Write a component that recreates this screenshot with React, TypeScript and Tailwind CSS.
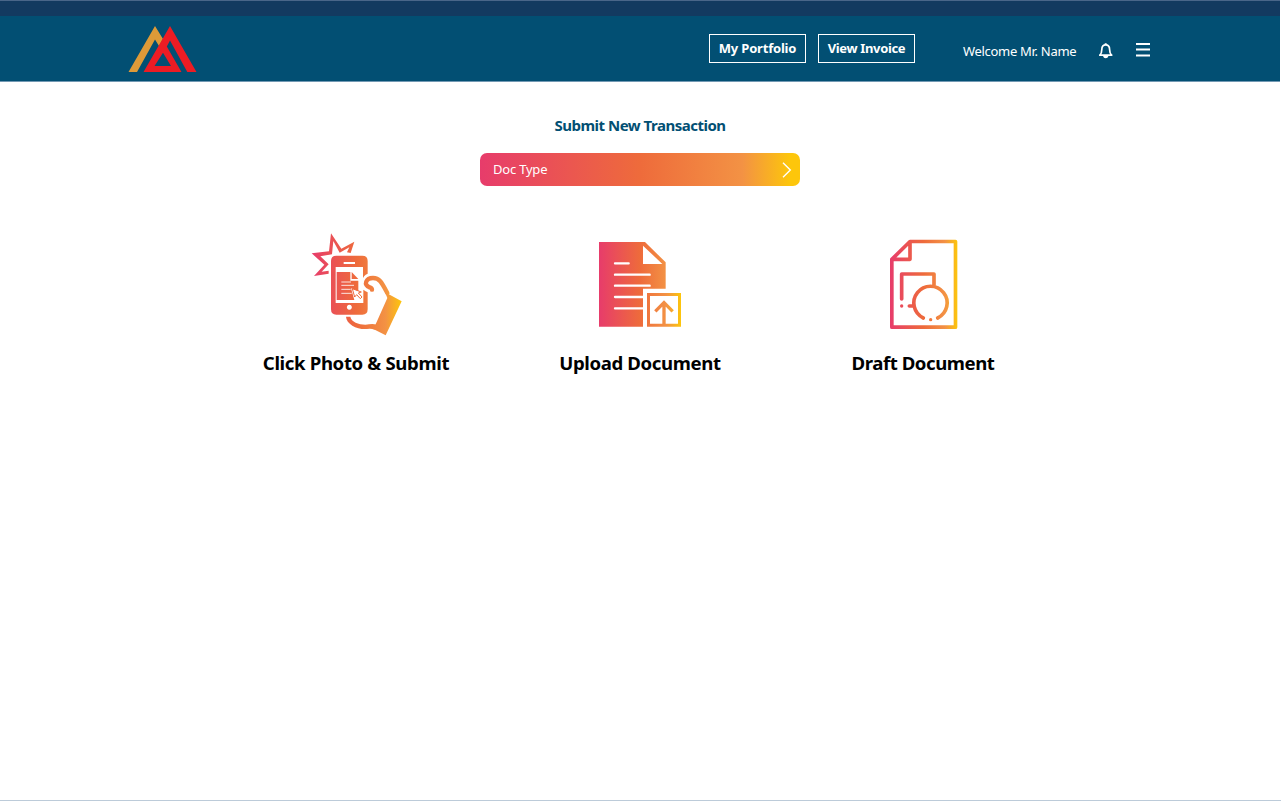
import React from "react";

function Stops() {
  return (
    <>
      <stop offset="0" stopColor="#e73c6b" />
      <stop offset="0.5" stopColor="#ee6b3b" />
      <stop offset="0.82" stopColor="#f39244" />
      <stop offset="1" stopColor="#fdc60b" />
    </>
  );
}

function Logo() {
  return (
    <svg className="h-[50px] w-[70px]" viewBox="128 24 70 50">
      <path fill="#dd9a38" d="M128.5 72 155 26l8 13-4 7-4-6.500L137 72Z" />
      <path
        fill="#ec1c24"
        fillRule="evenodd"
        d="M170 26 143.500 72H181.500L166.800 46.500 170 40.500 187.300 72H196.500ZM163 52.800 171 66H154.500Z"
      />
    </svg>
  );
}

function PhotoIcon() {
  return (
    <svg className="h-[115px] w-[110px]" viewBox="0 0 330 345" fill="none">
      <defs>
        <linearGradient id="photo" gradientUnits="userSpaceOnUse" x1="35" y1="0" x2="305" y2="0">
          <Stops />
        </linearGradient>
      </defs>
      <path
        fill="url(#photo)"
        d="M163 50 124 71 93 25 87 79 35 85 73 119 42 153 86 146V137L65 140 86 118 61 94 96 88 100 48 119 83 148 67 141 82 152 84Z"
      />
      <path
        fill="url(#photo)"
        fillRule="evenodd"
        d="M109 92H187Q203 92 203 108V146Q190 152 189 160V126H107V234H190V194Q197 199 203 202V253Q203 269 187 269H109Q93 269 93 253V108Q93 92 109 92ZM131 111V117H165V111ZM148 239a7.500 7.500 0 1 0 .1 0Z"
      />
      <path fill="url(#photo)" d="M110 141H151V167H175V198L153 190 163 225H110Z" />
      <path fill="url(#photo)" d="M155 141 175 162H155Z" />
      <path stroke="#fff" strokeWidth="2.500" d="M124 171H153M124 181H162M124 193H152M124 205H155" />
      <path
        stroke="url(#photo)"
        strokeWidth="3"
        strokeLinejoin="round"
        d="M157 191 164 216 170 209 181 221 186 216 175 204 184 201Z"
      />
      <path
        stroke="url(#photo)"
        strokeWidth="13"
        strokeLinecap="round"
        d="M216 194Q216 190 209 187C189 180 198 159 219 159C239 159 245 172 262 204"
      />
      <path
        fill="url(#photo)"
        d="M138 275H151C154 293 185 302 207 298Q219 295 230 299L224 314Q212 309 201 312C174 315 139 298 138 275Z"
      />
      <path fill="url(#photo)" d="M265 207 305 229 257 331 220 312 230 291 262 219 256 204Z" />
    </svg>
  );
}

function UploadIcon() {
  return (
    <svg className="h-[100px] w-[100px]" viewBox="0 0 300 300" fill="none">
      <defs>
        <linearGradient id="upload" gradientUnits="userSpaceOnUse" x1="27" y1="0" x2="273" y2="0">
          <Stops />
        </linearGradient>
      </defs>
      <path
        fill="url(#upload)"
        fillRule="evenodd"
        d="M27 21H165L227 82V161H159V275H27ZM159 32V87H217Z"
      />
      <path
        stroke="#fff"
        strokeWidth="7"
        strokeLinecap="round"
        d="M75 85H116M75 119H179M75 152H179M75 186H158M75 220H158"
      />
      <path stroke="url(#upload)" strokeWidth="9" d="M175.500 178.500H268.500V270.500H175.500Z" />
      <path stroke="url(#upload)" strokeWidth="10" d="M222 270V203M196 229 222 203 248 229" />
    </svg>
  );
}

function DraftIcon() {
  return (
    <svg className="h-[105px] w-[90px]" viewBox="0 0 270 315" fill="none">
      <defs>
        <linearGradient id="draft" gradientUnits="userSpaceOnUse" x1="30" y1="0" x2="232" y2="0">
          <Stops />
        </linearGradient>
      </defs>
      <g stroke="url(#draft)" strokeWidth="11" strokeLinecap="round" strokeLinejoin="round">
        <path d="M35.500 82 90 28.500H226.500V285.500H35.500ZM90 28.500V82H35.500" />
        <path d="M65 201V126H162V160M88 222H101M130 258A50 50 0 1 1 173 258" />
      </g>
      <circle cx="65" cy="222" r="5" fill="url(#draft)" />
      <circle cx="152" cy="263" r="5" fill="url(#draft)" />
    </svg>
  );
}

export default function App() {
  return (
    <div className="flex h-[801px] w-[1281px] flex-col border-b border-[#bccbd9] bg-white font-['Noto_Sans',sans-serif] text-black">
      <div className="h-4 w-[1280px] border-t border-[#4a6689] bg-[#133a60]" />
      <header className="flex h-[66px] w-[1280px] items-start border-b border-[#7299b3] bg-[#024f73] pl-32 text-white">
        <div className="mt-2">
          <Logo />
        </div>
        <nav className="mt-[18px] ml-[511px] flex gap-3 text-[13px] font-bold">
          <button className="flex h-[29px] w-[97px] items-center justify-center border border-white whitespace-nowrap tracking-[-0.19px]">
            My Portfolio
          </button>
          <button className="flex h-[29px] w-[97px] items-center justify-center border border-white whitespace-nowrap tracking-[-0.35px]">
            View Invoice
          </button>
        </nav>
        <span className="mt-[25px] ml-12 w-[114px] text-[13px] leading-5 tracking-[-0.3px] whitespace-nowrap">
          Welcome Mr. Name
        </span>
        <svg className="mt-[26px] ml-[21px] h-[18px] w-4" viewBox="0 0 16 18" fill="none" stroke="#fff">
          <path strokeWidth="1.700" strokeLinejoin="round" d="M1.800 13.200Q3.800 11.500 3.800 7.500C3.800 4.200 5.500 2.800 7.700 2.800S11.600 4.200 11.600 7.500Q11.600 11.500 13.700 13.200Z" />
          <path fill="#fff" stroke="none" d="M6.700 1.200H8.700V3H6.700ZM5 14H10.500Q9.800 16.300 7.700 16.300T5 14Z" />
        </svg>
        <svg className="mt-[26px] ml-[21px] h-4 w-4" viewBox="0 0 16 16" stroke="#fff" strokeWidth="2">
          <path d="M1 2H15M1 7.500H15M1 13.500H15" />
        </svg>
      </header>
      <main className="flex w-[1280px] flex-col items-center">
        <h1 className="mt-[31px] text-[15px] leading-6 font-bold tracking-[-0.49px] text-[#024f73]">
          Submit New Transaction
        </h1>
        <button className="mt-4 flex h-[33px] w-80 items-center justify-between rounded-[7px] bg-[linear-gradient(90deg,#e73c6b_0%,#ee6b3b_50%,#f39244_82%,#fdc60b_97%)] pr-2 pl-[13px] text-[13px] tracking-[-0.2px] text-white">
          <span>Doc Type</span>
          <svg className="h-4 w-[10px]" viewBox="0 0 10 16" fill="none" stroke="#fff" strokeWidth="1.400">
            <path d="M1 .8 8.300 8 1 15.200" />
          </svg>
        </button>
        <section className="mt-[39px] flex w-full text-[18.600px] leading-7 font-bold whitespace-nowrap">
          <div className="ml-[256px] flex w-[200px] flex-col items-center">
            <div className="-ml-[2px] flex h-[124px] items-start">
              <PhotoIcon />
            </div>
            <h2 className="tracking-[-0.35px]">Click Photo &amp; Submit</h2>
          </div>
          <div className="ml-[84px] flex w-[200px] flex-col items-center">
            <div className="flex h-[124px] items-start pt-[10px]">
              <UploadIcon />
            </div>
            <h2 className="tracking-[-0.37px]">Upload Document</h2>
          </div>
          <div className="ml-[83px] flex w-[200px] flex-col items-center">
            <div className="flex h-[124px] items-start pt-[7px] pl-1">
              <DraftIcon />
            </div>
            <h2 className="tracking-[-0.44px]">Draft Document</h2>
          </div>
        </section>
      </main>
    </div>
  );
}
